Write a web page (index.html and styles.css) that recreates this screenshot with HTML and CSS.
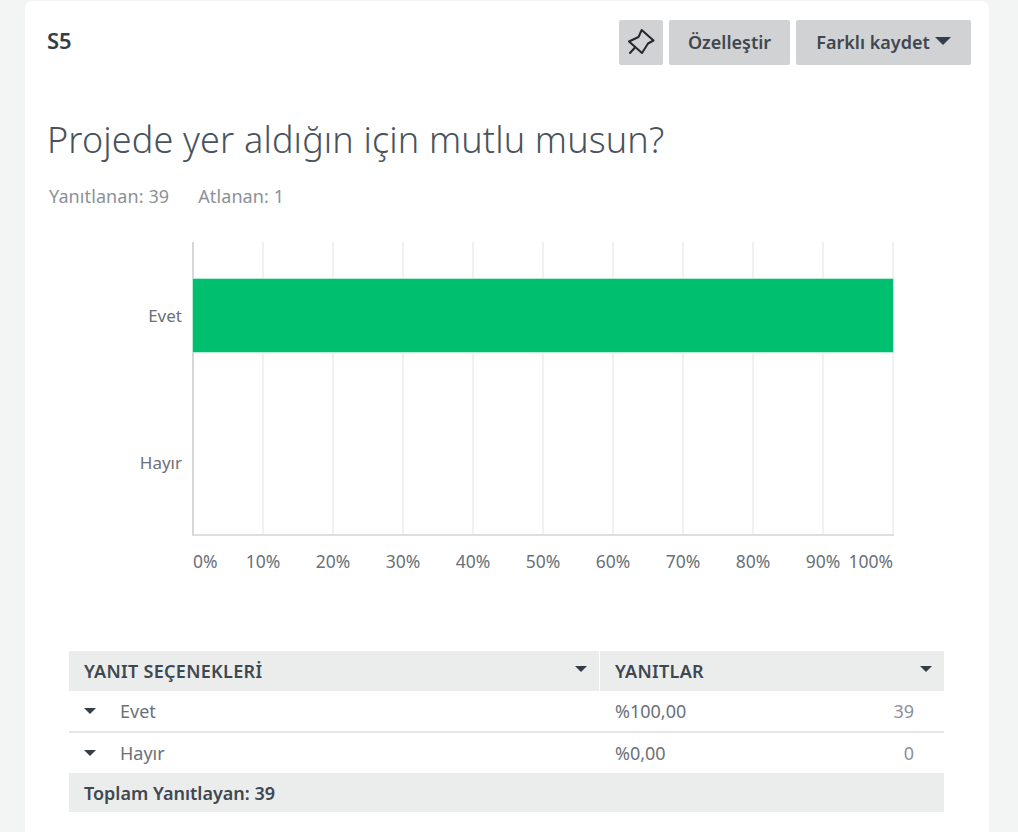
FILE: index.html
```html
<!DOCTYPE html>
<html lang="tr">
<head>
<meta charset="utf-8">
<title>S5</title>
<link rel="stylesheet" href="styles.css">
</head>
<body>
<main class="card">
  <header class="head">
    <h2 class="qnum">S5</h2>
    <div class="actions">
      <button class="btn btn-icon" aria-label="Sabitle">
        <svg width="30" height="30" viewBox="0 0 30 30" fill="none" stroke="#23282d" stroke-width="2" stroke-linejoin="round" stroke-linecap="round">
          <path d="M15.7 2 L27.5 12.5 L22 15.5 L16 25 L3 13.5 L12.5 9 Z"/>
          <path d="M9 19.5 L4 25"/>
        </svg>
      </button>
      <button class="btn btn-custom">Özelleştir</button>
      <button class="btn btn-save">Farklı kaydet<span class="caret caret-btn"></span></button>
    </div>
  </header>
  <h1 class="title">Projede yer aldığın için mutlu musun?</h1>
  <p class="stats"><span>Yanıtlanan: 39</span><span>Atlanan: 1</span></p>

  <section class="chart">
    <div class="ylabels"><div>Evet</div><div>Hayır</div></div>
    <div class="plot">
      <div class="band"><div class="bar"></div></div>
      <div class="band"></div>
    </div>
    <div class="xlabels">
      <span class="tick-first">0%</span><span>10%</span><span>20%</span><span>30%</span><span>40%</span><span>50%</span><span>60%</span><span>70%</span><span>80%</span><span>90%</span><span class="tick-last">100%</span>
    </div>
  </section>

  <section class="table">
    <div class="row row-head">
      <div class="c1">YANIT SEÇENEKLERİ<span class="caret caret-th"></span></div>
      <div class="c2">YANITLAR<span class="caret caret-th"></span></div>
    </div>
    <div class="row row-body row-line">
      <div class="c1"><span class="caret caret-row"></span>Evet</div>
      <div class="c2"><span>%100,00</span><span class="num">39</span></div>
    </div>
    <div class="row row-body">
      <div class="c1"><span class="caret caret-row"></span>Hayır</div>
      <div class="c2"><span>%0,00</span><span class="num">0</span></div>
    </div>
    <div class="row row-foot">
      <div class="c1">Toplam Yanıtlayan: 39</div>
      <div class="c2"></div>
    </div>
  </section>
</main>
</body>
</html>
```
FILE: styles.css
```css
* { box-sizing: border-box; }
html, body { margin: 0; height: 832px; overflow: hidden; }
body {
  background: #f3f5f5;
  font-family: "Noto Sans", "Liberation Sans", sans-serif;
  color: #333e48;
}
.card {
  width: 964px;
  height: 840px;
  margin: 1px 0 0 25px;
  padding: 19px 18px 0 22px;
  background: #fff;
  border-radius: 7px;
}
.head { display: flex; justify-content: space-between; align-items: flex-start; }
.qnum { margin: 9px 0 0; font-size: 22px; line-height: 22px; font-weight: 600; color: #333e48; }
.actions { display: flex; gap: 6px; }
.btn {
  height: 45px;
  border: 0;
  border-radius: 2px;
  background: #d0d2d3;
  color: #3f4750;
  font: 600 18px "Noto Sans", sans-serif;
  padding: 0 0 2px;
  display: flex;
  align-items: center;
  justify-content: center;
}
.btn-icon { width: 44px; padding: 0; }
.btn-custom { width: 121px; }
.btn-save { width: 175px; }
.caret {
  display: inline-block;
  width: 0;
  height: 0;
  border-left: 6px solid transparent;
  border-right: 6px solid transparent;
  border-top: 6px solid #333e48;
}
.caret-btn { margin-left: 5px; border-left-width: 8.5px; border-right-width: 8.5px; border-top-width: 8px; margin-top: -1px; }
.title { margin: 52px 0 0; font-size: 36px; line-height: 46px; font-weight: 300; letter-spacing: .14px; color: #4a535c; }
.stats { margin: 21px 0 0 2px; display: flex; gap: 29px; font-size: 18px; line-height: 24px; color: #8c9198; letter-spacing: .1px; }
.chart {
  margin: 34px 0 0 0;
  display: grid;
  grid-template-columns: 145px 702px;
  grid-template-rows: 294px auto;
}
.ylabels { display: grid; grid-template-rows: 1fr 1fr; padding-right: 10px; text-align: right; font-size: 17px; color: #6b7078; }
.ylabels div { align-self: center; }
.plot {
  display: grid;
  grid-template-rows: 1fr 1fr;
  border-left: 2px solid #d5d7d8;
  border-bottom: 2px solid #dcdedf;
  background-image: repeating-linear-gradient(to right, transparent 0, transparent 68px, #f0f1f1 68px, #f0f1f1 70px);
}
.band { display: flex; align-items: center; }
.bar { width: 100%; height: 73px; margin-left: -1px; background: #00bf6f; box-shadow: 0 0 0 1px #b6ecd3; }
.xlabels {
  grid-column: 2;
  display: flex;
  padding: 13px 0 0 1px;
  font-size: 17.5px;
  line-height: 24px;
  color: #6b7078;
}
.xlabels span { width: 70px; text-align: center; flex: none; }
.xlabels .tick-first { width: 35px; text-align: left; }
.xlabels .tick-last { width: 35px; display: flex; justify-content: flex-end; white-space: nowrap; }
.table { margin: 78px 0 0 22px; width: 875px; font-size: 18px; }
.row { display: grid; grid-template-columns: 531px 344px; }
.c1, .c2 { display: flex; align-items: center; padding-left: 15px; }
.row-head { height: 40px; font-weight: 600; color: #3f4750; letter-spacing: .3px; }
.row-head .c1, .row-head .c2, .row-foot .c1, .row-foot .c2 { background: #ebeded; }
.row-head .c1 { border-right: 1px solid #fff; justify-content: space-between; padding-right: 12px; }
.row-head .c2 { justify-content: space-between; padding-right: 12px; }
.caret-th { border-left-width: 6.5px; border-right-width: 6.5px; border-top-width: 6px; margin-top: -5px; }
.row-body { height: 40px; color: #6b7078; }
.row-line { height: 42px; border-bottom: 2px solid #e6e8e8; }
.row-body .c2 { justify-content: space-between; padding-right: 30px; }
.caret-row { margin-right: 24px; border-left-width: 6.5px; border-right-width: 6.5px; border-top-width: 6px; }
.num { color: #8c9198; }
.row-foot { height: 39px; font-weight: 600; color: #3f4750; }
```
